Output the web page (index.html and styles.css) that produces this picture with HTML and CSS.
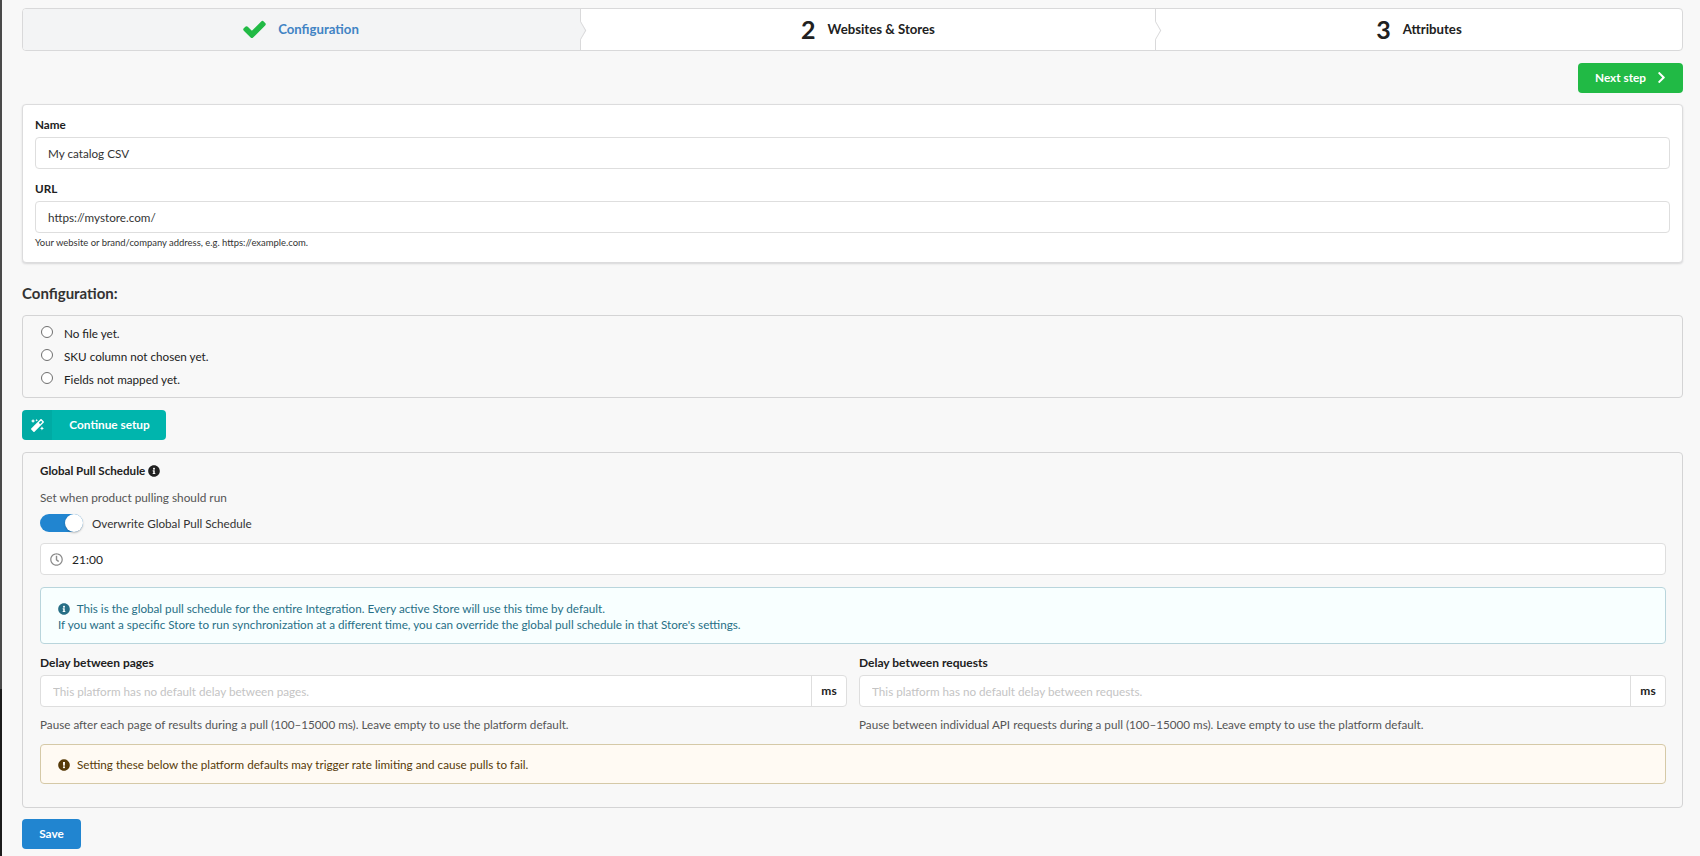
FILE: index.html
```html
<!DOCTYPE html>
<html lang="en">
<head>
<meta charset="utf-8">
<title>Configuration</title>
<link rel="stylesheet" href="styles.css">
</head>
<body>
<main class="page">
  <div class="steps">
    <div class="step step-done">
      <svg class="step-check" viewBox="0 0 512 512"><path d="M173.898 439.404l-166.4-166.4c-9.997-9.997-9.997-26.206 0-36.204l36.203-36.204c9.997-9.998 26.207-9.998 36.204 0L192 312.69 432.095 72.596c9.997-9.997 26.207-9.997 36.204 0l36.203 36.204c9.997 9.997 9.997 26.206 0 36.204l-294.4 294.401c-9.998 9.997-26.207 9.997-36.204-.001z"/></svg>
      <span class="step-title step-title-active">Configuration</span>
    </div>
    <div class="step step-two">
      <span class="step-num">2</span>
      <span class="step-title">Websites &amp; Stores</span>
    </div>
    <div class="step step-three">
      <span class="step-num">3</span>
      <span class="step-title">Attributes</span>
    </div>
  </div>

  <div class="next-row">
    <button class="btn btn-next" type="button">Next step
      <svg class="next-icon" viewBox="0 0 320 512"><path d="M285.476 272.971L91.132 467.314c-9.373 9.373-24.569 9.373-33.941 0l-22.667-22.667c-9.357-9.357-9.375-24.522-.04-33.901L188.505 256 34.484 101.255c-9.335-9.379-9.317-24.544.04-33.901l22.667-22.667c9.373-9.373 24.569-9.373 33.941 0L285.475 239.03c9.373 9.372 9.373 24.568.001 33.941z"/></svg>
    </button>
  </div>

  <section class="card">
    <label class="label">Name</label>
    <input class="input" type="text" value="My catalog CSV">
    <label class="label label-url">URL</label>
    <input class="input" type="text" value="https://mystore.com/">
    <p class="mini-help">Your website or brand/company address, e.g. https://example.com.</p>
  </section>

  <h2 class="heading">Configuration:</h2>

  <section class="segment checklist">
    <div class="check-item"><span class="radio"></span>No file yet.</div>
    <div class="check-item"><span class="radio"></span>SKU column not chosen yet.</div>
    <div class="check-item"><span class="radio"></span>Fields not mapped yet.</div>
  </section>

  <button class="btn btn-setup" type="button">
    <span class="setup-icon"><svg viewBox="0 0 512 512"><path d="M224 96l16-32 32-16-32-16-16-32-16 32-32 16 32 16 16 32zM80 160l26.66-53.33L160 80l-53.34-26.67L80 0 53.34 53.33 0 80l53.34 26.67L80 160zm352 128l-26.66 53.33L352 368l53.34 26.67L432 448l26.66-53.33L512 368l-53.34-26.67L432 288zm70.62-193.77L417.77 9.38C411.53 3.12 403.34 0 395.15 0c-8.19 0-16.38 3.12-22.63 9.38L9.38 372.52c-12.5 12.5-12.5 32.76 0 45.25l84.85 84.85c6.25 6.25 14.44 9.37 22.62 9.37 8.19 0 16.38-3.12 22.63-9.37l363.14-363.15c12.5-12.49 12.5-32.75 0-45.24zM359.45 203.46l-50.91-50.91 86.6-86.6 50.91 50.91-86.6 86.6z"/></svg></span>
    <span class="setup-text">Continue setup</span>
  </button>

  <section class="segment schedule">
    <div class="schedule-title">Global Pull Schedule
      <svg class="title-info" viewBox="0 0 512 512"><path d="M256 8C119.043 8 8 119.083 8 256c0 136.997 111.043 248 248 248s248-111.003 248-248C504 119.083 392.957 8 256 8zm0 110c23.196 0 42 18.804 42 42s-18.804 42-42 42-42-18.804-42-42 18.804-42 42-42zm56 254c0 6.627-5.373 12-12 12h-88c-6.627 0-12-5.373-12-12v-24c0-6.627 5.373-12 12-12h12v-64h-12c-6.627 0-12-5.373-12-12v-24c0-6.627 5.373-12 12-12h64c6.627 0 12 5.373 12 12v100h12c6.627 0 12 5.373 12 12v24z"/></svg>
    </div>
    <p class="schedule-sub">Set when product pulling should run</p>
    <div class="toggle-row">
      <span class="toggle"><span class="knob"></span></span>
      <span class="toggle-label">Overwrite Global Pull Schedule</span>
    </div>
    <div class="time-box">
      <svg class="clock" viewBox="0 0 512 512"><path d="M256 8C119 8 8 119 8 256s111 248 248 248 248-111 248-248S393 8 256 8zm0 448c-110.5 0-200-89.5-200-200S145.5 56 256 56s200 89.5 200 200-89.5 200-200 200zm61.8-104.4l-84.9-61.7c-3.1-2.3-4.9-5.9-4.9-9.7V116c0-6.6 5.4-12 12-12h32c6.6 0 12 5.4 12 12v141.7l66.8 48.6c5.4 3.9 6.5 11.4 2.6 16.8L334.6 349c-3.9 5.3-11.4 6.5-16.8 2.6z"/></svg>
      <input class="time-input" type="text" value="21:00">
    </div>
    <div class="msg msg-info">
      <svg class="msg-icon" viewBox="0 0 512 512"><path d="M256 8C119.043 8 8 119.083 8 256c0 136.997 111.043 248 248 248s248-111.003 248-248C504 119.083 392.957 8 256 8zm0 110c23.196 0 42 18.804 42 42s-18.804 42-42 42-42-18.804-42-42 18.804-42 42-42zm56 254c0 6.627-5.373 12-12 12h-88c-6.627 0-12-5.373-12-12v-24c0-6.627 5.373-12 12-12h12v-64h-12c-6.627 0-12-5.373-12-12v-24c0-6.627 5.373-12 12-12h64c6.627 0 12 5.373 12 12v100h12c6.627 0 12 5.373 12 12v24z"/></svg>
      This is the global pull schedule for the entire Integration. Every active Store will use this time by default.<br>
      If you want a specific Store to run synchronization at a different time, you can override the global pull schedule in that Store's settings.
    </div>
    <div class="delay-grid">
      <div class="delay-col">
        <label class="delay-label">Delay between pages</label>
        <div class="addon-input">
          <input class="addon-field" type="text" placeholder="This platform has no default delay between pages.">
          <span class="addon">ms</span>
        </div>
        <p class="delay-help">Pause after each page of results during a pull (100–15000 ms). Leave empty to use the platform default.</p>
      </div>
      <div class="delay-col">
        <label class="delay-label">Delay between requests</label>
        <div class="addon-input">
          <input class="addon-field" type="text" placeholder="This platform has no default delay between requests.">
          <span class="addon">ms</span>
        </div>
        <p class="delay-help">Pause between individual API requests during a pull (100–15000 ms). Leave empty to use the platform default.</p>
      </div>
    </div>
    <div class="msg msg-warn">
      <svg class="msg-icon" viewBox="0 0 512 512"><path d="M504 256c0 136.997-111.043 248-248 248S8 392.997 8 256C8 119.083 119.043 8 256 8s248 111.083 248 248zm-248 50c-25.405 0-46 20.595-46 46s20.595 46 46 46 46-20.595 46-46-20.595-46-46-46zm-43.673-165.346l7.418 136c.347 6.364 5.609 11.346 11.982 11.346h48.546c6.373 0 11.635-4.982 11.982-11.346l7.418-136c.375-6.874-5.098-12.654-11.982-12.654h-63.383c-6.884 0-12.356 5.78-11.981 12.654z"/></svg>
      Setting these below the platform defaults may trigger rate limiting and cause pulls to fail.
    </div>
  </section>

  <button class="btn btn-save" type="button">Save</button>
</main>
</body>
</html>
```

FILE: styles.css
```css
* { box-sizing: border-box; }
html, body { height: 100%; }
body {
  margin: 0;
  background: #f8f8f8;
  color: #212121;
  font-family: Lato, "Open Sans", sans-serif;
  font-size: 12px;
  line-height: 20px;
  overflow: hidden;
  border-left: 2px solid #3a3a3a;
  border-image: linear-gradient(#4a4a4a 0, #4a4a4a 688px, #1c1c1c 688px) 1;
}
.page { padding: 8px 17px 0 20px; }

.steps {
  display: flex;
  height: 43px;
  background: #fff;
  border: 1px solid #d9d9da;
  border-radius: 4px;
}
.step {
  position: relative;
  display: flex;
  align-items: center;
  justify-content: center;
  padding-bottom: 1px;
  color: #212121;
}
.step-done { width: 558px; background: #f3f4f5; border-radius: 3px 0 0 3px; border-right: 1px solid #d9d9da; }
.step-two { width: 575px; border-right: 1px solid #d9d9da; }
.step-three { flex: 1; }
.step-done::after, .step-two::after {
  content: "";
  position: absolute;
  right: -6px;
  top: 50%;
  width: 10px;
  height: 10px;
  margin-top: -5px;
  background: #fff;
  border-top: 1px solid #d9d9da;
  border-right: 1px solid #d9d9da;
  transform: rotate(45deg) skew(15deg, 15deg);
}
.step-done::after { background: #f3f4f5; }
.step-check { width: 21px; height: 21px; fill: #21ba45; stroke: #21ba45; stroke-width: 34; stroke-linejoin: round; margin-right: 13px; overflow: visible; }
.step-num { font-size: 25px; font-weight: 700; line-height: 24px; margin-right: 12px; color: #212121; }
.step-title { font-size: 13.2px; font-weight: 700; }
.step-title-active { color: #4183c4; }

.next-row { display: flex; justify-content: flex-end; margin-top: 12px; }
.btn {
  border: 0;
  border-radius: 4px;
  color: #fff;
  font-family: inherit;
  font-size: 11.8px;
  font-weight: 700;
  cursor: pointer;
}
.btn-next {
  display: flex;
  align-items: center;
  justify-content: center;
  width: 105px;
  height: 30px;
  background: #21ba45;
  padding: 0 0 2px;
}
.next-icon { width: 9px; height: 13px; fill: #fff; margin-left: 11px; }

.card {
  margin-top: 11px;
  padding: 11px 12px 10px;
  height: 159px;
  background: #fff;
  border: 1px solid #dcdcdd;
  border-radius: 4px;
  box-shadow: 0 1px 2px rgba(34, 36, 38, .15);
}
.label { display: block; font-size: 11.7px; font-weight: 700; line-height: 16px; color: #212121; margin-bottom: 5px; }
.label-url { margin-top: 11px; }
.input {
  display: block;
  width: 100%;
  height: 32px;
  padding: 0 12px;
  background: #fff;
  border: 1px solid #dedede;
  border-radius: 4px;
  color: #333;
  font: 11.7px Lato, sans-serif;
}
.mini-help { margin: 3px 0 0; font-size: 9.45px; line-height: 14px; color: #333; }

.heading { margin: 20px 0 12px; font-size: 15px; line-height: 20px; font-weight: 700; color: #333; }

.segment { border: 1px solid #d4d4d5; border-radius: 4px; background: #f8f8f8; }
.checklist { height: 83px; padding: 5px 18px; }
.check-item { display: flex; align-items: center; height: 23px; font-size: 11.7px; color: #212121; }
.radio { width: 12px; height: 12px; margin: -1px 11px 0 0; border: 1px solid #6f6f6f; border-radius: 50%; background: #fff; }

.btn-setup {
  display: flex;
  align-items: center;
  width: 144px;
  height: 30px;
  margin-top: 12px;
  padding: 0;
  background: #00b5ad;
  overflow: hidden;
}
.setup-icon {
  display: flex;
  align-items: center;
  justify-content: center;
  width: 30px;
  height: 30px;
  background: rgba(0, 0, 0, .05);
}
.setup-icon svg { width: 13px; height: 13px; fill: #fff; }
.setup-text { flex: 1; text-align: center; padding: 0 0 2px 1px; }

.schedule { margin-top: 12px; height: 356px; padding: 8px 16px 9px 17px; }
.schedule-title { display: flex; align-items: center; font-size: 11.6px; font-weight: 700; line-height: 20px; color: #212121; }
.title-info { width: 12px; height: 12px; margin-left: 3px; fill: #212121; }
.schedule-sub { margin: 7px 0 0; font-size: 11.8px; line-height: 20px; color: #555; }
.toggle-row { display: flex; align-items: center; height: 20px; margin-top: 5px; }
.toggle { position: relative; width: 43px; height: 18px; border-radius: 9px; background: #2185d0; }
.knob {
  position: absolute;
  right: 0;
  top: 0;
  width: 18px;
  height: 18px;
  border-radius: 50%;
  background: #fff;
  box-shadow: 0 1px 2px rgba(34, 36, 38, .3);
}
.toggle-label { margin-left: 9px; font-size: 11.7px; color: #333; }
.time-box {
  display: flex;
  align-items: center;
  height: 32px;
  margin-top: 10px;
  padding-left: 9px;
  background: #fff;
  border: 1px solid #dedede;
  border-radius: 4px;
}
.clock { width: 13px; height: 13px; fill: #8a8a8a; }
.time-input { flex: 1; border: 0; outline: 0; padding: 0 0 0 9px; background: transparent; color: #212121; font: 12px Lato, sans-serif; }

.msg { border-radius: 4px; font-size: 11.7px; line-height: 16px; }
.msg-icon { display: inline-block; width: 12px; height: 12px; vertical-align: -2px; margin-right: 4px; fill: currentColor; }
.msg-info {
  margin-top: 12px;
  height: 57px;
  padding: 12px 17px;
  background: #f8ffff;
  border: 1px solid #b9d5dc;
  color: #276f86;
}
.delay-grid { display: grid; grid-template-columns: 1fr 1fr; gap: 12px; margin-top: 11px; }
.delay-label { display: block; font-size: 12px; font-weight: 700; line-height: 16px; color: #212121; margin-bottom: 4px; }
.addon-input {
  display: flex;
  height: 32px;
  background: #fff;
  border: 1px solid #dedede;
  border-radius: 4px;
}
.addon-field { flex: 1; min-width: 0; border: 0; outline: 0; padding: 0 12px; background: transparent; font: 11.7px Lato, sans-serif; }
.addon-field::placeholder { color: #c4c4c4; opacity: 1; }
.addon {
  display: flex;
  align-items: center;
  justify-content: center;
  width: 35px;
  border-left: 1px solid #dedede;
  font-size: 12px;
  font-weight: 700;
}
.delay-help { margin: 7px 0 0; font-size: 11.7px; line-height: 20px; color: #555; }
.msg-warn {
  display: block;
  margin-top: 10px;
  height: 40px;
  padding: 11px 17px;
  background: #fffaf3;
  border: 1px solid #d5c9a7;
  color: #573a08;
}

.btn-save { display: block; width: 59px; height: 30px; margin-top: 11px; background: #2185d0; padding: 0 0 2px; }
```
